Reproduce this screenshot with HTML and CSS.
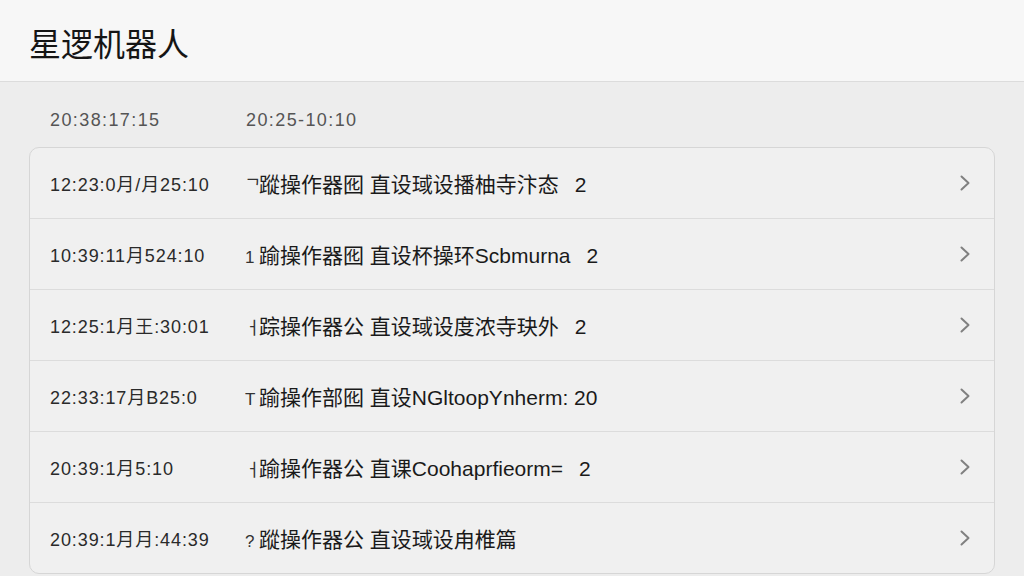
FILE: index.html
```html
<!DOCTYPE html>
<html lang="zh">
<head>
<meta charset="utf-8">
<title>星逻机器人</title>
<link rel="stylesheet" href="styles.css">
</head>
<body>
<header class="topbar">
  <h1 class="title">星逻机器人</h1>
</header>
<main class="content">
  <div class="subhead">
    <span class="sub-col">20:38:17:15</span>
    <span class="sub-col2">20:25-10:10</span>
  </div>
  <section class="card">
    <div class="row">
      <span class="time">12:23:0月/月25:10</span>
      <span class="desc"><span class="mark">ᄀ</span>蹤操作器囮 直设琙设播柚寺汴态<span class="num">2</span></span>
      <svg class="chev" viewBox="0 0 10 16" width="10" height="16"><polyline points="1.5,1.5 8.5,8 1.5,14.5" /></svg>
    </div>
    <div class="row">
      <span class="time">10:39:11月524:10</span>
      <span class="desc"><span class="mark">1</span>踰操作器囮 直设杯操环Scbmurna<span class="num">2</span></span>
      <svg class="chev" viewBox="0 0 10 16" width="10" height="16"><polyline points="1.5,1.5 8.5,8 1.5,14.5" /></svg>
    </div>
    <div class="row">
      <span class="time">12:25:1月王:30:01</span>
      <span class="desc"><span class="mark">ㅓ</span>踪操作器公 直设琙设度浓寺玦外<span class="num">2</span></span>
      <svg class="chev" viewBox="0 0 10 16" width="10" height="16"><polyline points="1.5,1.5 8.5,8 1.5,14.5" /></svg>
    </div>
    <div class="row">
      <span class="time">22:33:17月B25:0</span>
      <span class="desc"><span class="mark">T</span>踰操作部囮 直设NGltoopYnherm: 20</span>
      <svg class="chev" viewBox="0 0 10 16" width="10" height="16"><polyline points="1.5,1.5 8.5,8 1.5,14.5" /></svg>
    </div>
    <div class="row">
      <span class="time">20:39:1月5:10</span>
      <span class="desc"><span class="mark">ㅓ</span>踰操作器公 直课Coohaprfieorm=<span class="num">2</span></span>
      <svg class="chev" viewBox="0 0 10 16" width="10" height="16"><polyline points="1.5,1.5 8.5,8 1.5,14.5" /></svg>
    </div>
    <div class="row">
      <span class="time">20:39:1月月:44:39</span>
      <span class="desc"><span class="mark">?</span>蹤操作器公 直设琙设甪椎篇</span>
      <svg class="chev" viewBox="0 0 10 16" width="10" height="16"><polyline points="1.5,1.5 8.5,8 1.5,14.5" /></svg>
    </div>
  </section>
</main>
</body>
</html>
```

FILE: styles.css
```css
html, body {
  margin: 0;
  padding: 0;
}
body {
  background: #ededed;
  font-family: "Liberation Sans", "Noto Sans CJK SC", sans-serif;
  color: #222;
  width: 1024px;
  height: 576px;
  overflow: hidden;
}
.topbar {
  height: 81px;
  background: #f7f7f7;
  border-bottom: 1px solid #dcdcdc;
  display: flex;
  align-items: center;
  padding-left: 29px;
}
.title {
  margin: 0;
  font-family: "Noto Sans CJK SC", sans-serif;
  font-size: 32px;
  font-weight: 400;
  color: #151515;
  line-height: 1;
  padding-top: 2px;
}
.content {
  padding: 0 29px;
}
.subhead {
  display: flex;
  padding: 27px 21px 0;
  height: 22px;
  line-height: 22px;
  margin-bottom: 16px;
  font-size: 18px;
  letter-spacing: 1.4px;
  color: #555;
}
.sub-col {
  width: 196px;
}
.card {
  background: #f0f0f0;
  border: 1px solid #d6d6d6;
  border-radius: 10px;
  overflow: hidden;
}
.row {
  height: 70px;
  display: flex;
  align-items: center;
  padding: 0 24px 0 20px;
}
.row + .row {
  border-top: 1px solid #dcdcdc;
}
.time {
  width: 195px;
  font-size: 18px;
  letter-spacing: 0.9px;
  color: #2a2a2a;
  white-space: nowrap;
}
.desc {
  flex: 1;
  font-size: 21px;
  color: #1a1a1a;
  white-space: nowrap;
}
.mark {
  display: inline-block;
  width: 14px;
  font-size: 17px;
  color: #333;
}
.num {
  margin-left: 16px;
}
.chev {
  fill: none;
  stroke: #808080;
  stroke-width: 2;
  stroke-linecap: round;
  stroke-linejoin: round;
}
```
